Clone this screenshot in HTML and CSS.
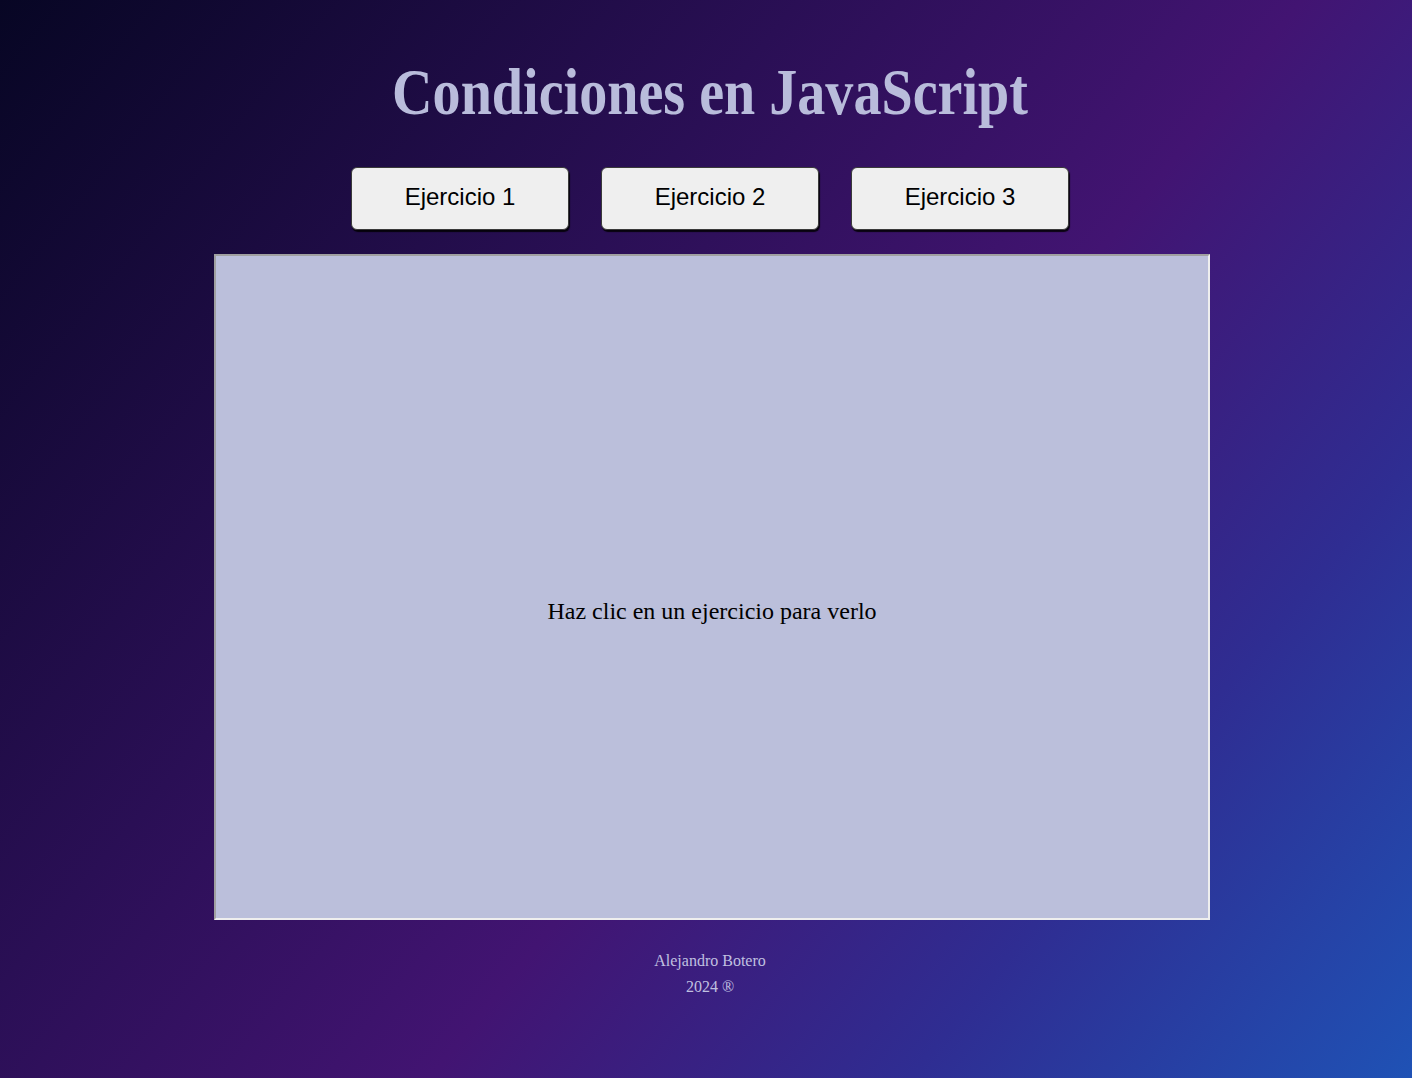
FILE: index.html
```html
<!DOCTYPE html>
<html lang="es">
<head>
<meta charset="utf-8">
<title>Condiciones en JavaScript</title>
<link rel="stylesheet" href="styles.css">
</head>
<body>
<div class="page">
  <h1 class="title">Condiciones en JavaScript</h1>
  <nav class="buttons">
    <button class="btn">Ejercicio 1</button>
    <button class="btn">Ejercicio 2</button>
    <button class="btn">Ejercicio 3</button>
  </nav>
  <main class="viewer">
    <p class="placeholder">Haz clic en un ejercicio para verlo</p>
  </main>
  <footer class="footer">
    <p>Alejandro Botero</p>
    <p>2024 ®</p>
  </footer>
</div>
</body>
</html>
```

FILE: styles.css
```css
html, body {
  margin: 0;
  padding: 0;
}
body {
  min-height: 1078px;
  background: linear-gradient(129deg, #070624 0%, #2a0f55 35%, #421472 57%, #2f2d92 78%, #1f52b5 100%);
  font-family: "Liberation Serif", "Times New Roman", serif;
}
.page {
  display: flex;
  flex-direction: column;
  align-items: center;
  padding-left: 8px;
}
.title {
  margin: 52px 0 0 0;
  font-size: 66px;
  line-height: 80px;
  height: 83px;
  font-weight: bold;
  color: #b9bcdb;
  transform: scaleX(0.85);
  white-space: nowrap;
}
.buttons {
  display: flex;
  gap: 32px;
  margin-top: 32px;
}
.btn {
  width: 218px;
  height: 63px;
  background: #efefef;
  border: 1px solid #3a3a3a;
  border-radius: 6px;
  box-shadow: 1px 2px 1px rgba(0, 0, 0, 0.85);
  font-family: "Liberation Sans", Arial, sans-serif;
  font-size: 24px;
  line-height: 24px;
  color: #000;
  padding: 0 0 3px 0;
}
.viewer {
  box-sizing: border-box;
  width: 996px;
  height: 666px;
  margin-top: 24px;
  margin-left: 4px;
  background: #bbbfdb;
  border: 2px solid;
  border-color: #a0a0a0 #eeeeee #eeeeee #a0a0a0;
  display: flex;
  align-items: center;
  justify-content: center;
  padding-top: 48px;
}
.placeholder {
  margin: 0;
  font-size: 24px;
  color: #000;
}
.footer {
  margin-top: 28px;
  text-align: center;
  color: #c0c0e0;
  font-size: 16px;
  line-height: 26px;
}
.footer p {
  margin: 0;
}
```
